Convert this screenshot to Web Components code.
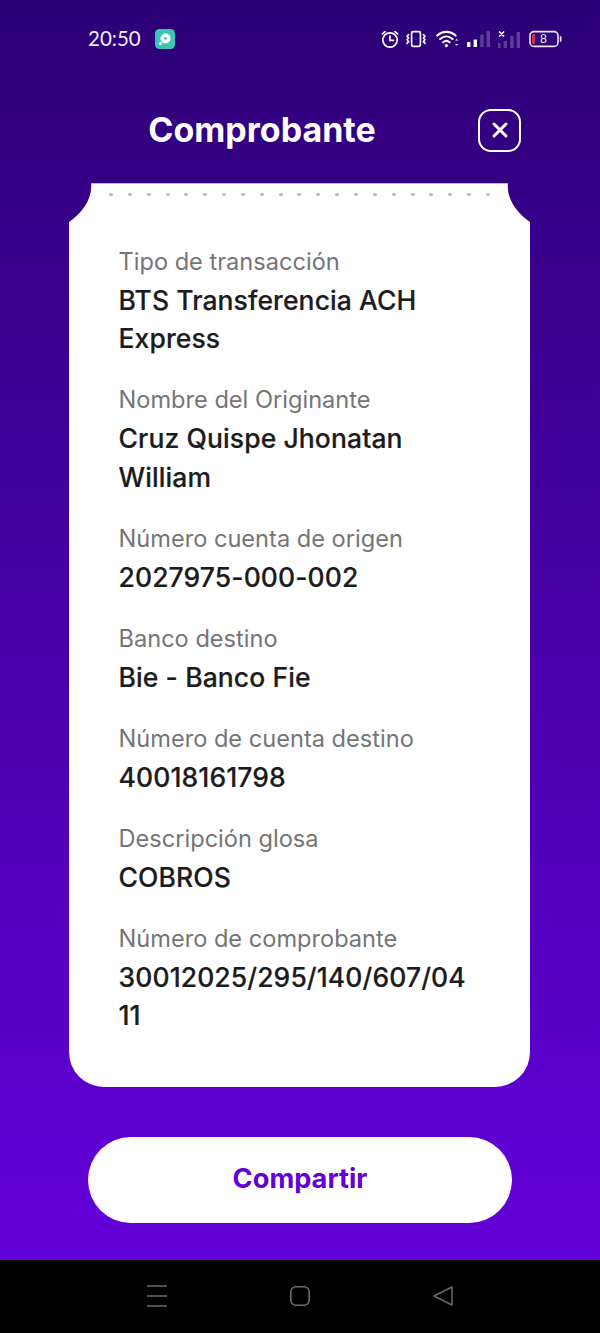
<!DOCTYPE html>
<html lang="es">
<head>
<meta charset="utf-8">
<title>Comprobante</title>
<style>
  html, body { margin: 0; padding: 0; background: #000; }
  body { font-family: "Inter", "Liberation Sans", sans-serif; }
</style>
</head>
<body>
<receipt-screen>
  <receipt-field label="Tipo de transacción">BTS Transferencia ACH Express</receipt-field>
  <receipt-field label="Nombre del Originante">Cruz Quispe Jhonatan William</receipt-field>
  <receipt-field label="Número cuenta de origen">2027975-000-002</receipt-field>
  <receipt-field label="Banco destino">Bie - Banco Fie</receipt-field>
  <receipt-field label="Número de cuenta destino">40018161798</receipt-field>
  <receipt-field label="Descripción glosa">COBROS</receipt-field>
  <receipt-field label="Número de comprobante">30012025/295/140/607/0411</receipt-field>
</receipt-screen>

<script>
class StatusBar extends HTMLElement {
    constructor() {
        super();
        this.attachShadow({ mode: 'open' });
    }

    connectedCallback() {
        this.shadowRoot.innerHTML = `
            <style>
                :host {
                    display: flex;
                    align-items: center;
                    height: 77px;
                    padding: 0 38px 0 88px;
                    box-sizing: border-box;
                    color: #fff;
                }
                .time {
                    font: 400 20.5px/1 "Lato", "Liberation Sans", sans-serif;
                    width: 52px;
                    margin-top: -1px;
                    color: #f4eefc;
                }
                .app { margin-left: 14.5px; display: block; }
                .icons { margin-left: auto; display: flex; align-items: center; }
                svg { display: block; }
            </style>
            <span class="time">20:50</span>
            <svg class="app" width="20" height="20" viewBox="0 0 20 20">
                <rect width="20" height="20" rx="4.5" fill="#3cc4b4"/>
                <circle cx="10.5" cy="9.5" r="5" fill="#fff"/>
                <circle cx="10.5" cy="9.5" r="1.4" fill="#3cc4b4"/>
                <circle cx="5.5" cy="14.5" r="1.6" fill="#fff"/>
            </svg>
            <div class="icons">
                <svg width="20" height="20" viewBox="0 0 20 20" fill="none" stroke="#fff" stroke-width="1.7" stroke-linecap="round" stroke-linejoin="round">
                    <circle cx="10" cy="11" r="7.2"/>
                    <path d="M10 7v4.4h3.4M2.4 4.8 5 2.6M17.6 4.8 15 2.6"/>
                </svg>
                <svg style="margin-left:6px" width="20" height="18" viewBox="0 0 20 18" fill="none" stroke="#fff" stroke-width="1.6" stroke-linecap="round" stroke-linejoin="round">
                    <rect x="5.6" y="1.6" width="8.8" height="14.8" rx="1.6"/>
                    <path d="M2.6 4.5 1 6.2l1.6 1.8L1 9.8l1.6 1.8L1 13.4M17.4 4.5 19 6.2l-1.6 1.8L19 9.8l-1.6 1.8 1.6 1.8"/>
                </svg>
                <svg style="margin-left:10px" width="23" height="20" viewBox="0 0 23 20" fill="none" stroke="#fff" stroke-width="2.1" stroke-linecap="round">
                    <path d="M1.2 6.6c5.4-5 13-5 18.4 0M4.2 10c3.7-3.3 8.7-3.3 12.4 0M7.2 13.2c2-1.7 4.4-1.7 6.4 0"/>
                    <circle cx="10.4" cy="16.6" r="1.6" fill="#fff" stroke="none"/>
                    <path d="m19 11.6 1.7-1.7 1.7 1.7zM19 15l1.7 1.7 1.7-1.7z" fill="#fff" stroke="none"/>
                </svg>
                <svg style="margin-left:8px" width="23" height="18" viewBox="0 0 23 18">
                    <rect x="0" y="12" width="3.4" height="5" rx=".6" fill="#fff"/>
                    <rect x="6.6" y="9.6" width="3.4" height="7.4" rx=".6" fill="#fff"/>
                    <rect x="13.2" y="4.6" width="3.4" height="12.4" rx=".6" fill="#5d3e97"/>
                    <rect x="19.6" y="1" width="3.4" height="16" rx=".6" fill="#5d3e97"/>
                </svg>
                <svg style="margin-left:7px" width="26" height="20" viewBox="0 0 26 20">
                    <path d="m2.6 3 4 4m0-4-4 4" stroke="#fff" stroke-width="1.7" fill="none" stroke-linecap="round"/>
                    <rect x="1" y="14" width="2.6" height="5" fill="#5d3e97"/>
                    <rect x="6.6" y="12" width="3.4" height="7" rx=".6" fill="#5d3e97"/>
                    <rect x="13.2" y="7" width="3.4" height="12" rx=".6" fill="#5d3e97"/>
                    <rect x="19.6" y="3" width="3.4" height="16" rx=".6" fill="#5d3e97"/>
                </svg>
                <svg style="margin-left:6px" width="33" height="18" viewBox="0 0 33 18">
                    <rect x="1" y="1.6" width="28" height="14.8" rx="4" fill="none" stroke="#efe6fb" stroke-width="1.6"/>
                    <rect x="3.2" y="4" width="2.8" height="10" rx=".8" fill="#e5304f"/>
                    <path d="M30.8 6.2h.7c.6 0 1 .4 1 1v3.6c0 .6-.4 1-1 1h-.7z" fill="#efe6fb"/>
                    <text x="14.5" y="13.4" font-family="Liberation Sans, sans-serif" font-size="12.5" text-anchor="middle" fill="#efe6fb">8</text>
                </svg>
            </div>
        `;
    }
}

class ReceiptHeader extends HTMLElement {
    constructor() {
        super();
        this.attachShadow({ mode: 'open' });
    }

    connectedCallback() {
        this.shadowRoot.innerHTML = `
            <style>
                :host {
                    display: flex;
                    align-items: center;
                    height: 106px;
                    padding: 0 79px 0 46px;
                    box-sizing: border-box;
                }
                h1 {
                    flex: 1;
                    margin: 0;
                    text-align: center;
                    color: #fff;
                    font: 700 34px/1.2 "Inter", "Liberation Sans", sans-serif;
                }
                button {
                    width: 43px;
                    height: 43px;
                    padding: 0;
                    box-sizing: border-box;
                    border: 2.2px solid #fff;
                    border-radius: 13px;
                    background: none;
                    display: flex;
                    align-items: center;
                    justify-content: center;
                }
            </style>
            <h1>Comprobante</h1>
            <button aria-label="Cerrar">
                <svg width="18" height="18" viewBox="0 0 18 18" stroke="#fff" stroke-width="3" stroke-linecap="round">
                    <path d="M3 3l12 12M15 3 3 15"/>
                </svg>
            </button>
        `;
    }
}

class ReceiptField extends HTMLElement {
    constructor() {
        super();
        this.attachShadow({ mode: 'open' });
    }

    connectedCallback() {
        const label = this.getAttribute('label') || '';
        this.shadowRoot.innerHTML = `
            <style>
                :host { display: block; }
                .label {
                    color: #757575;
                    font: 400 23.6px/39px "Inter", "Liberation Sans", sans-serif;
                }
                .value {
                    color: #1c1c1e;
                    font: 500 26.5px/38.8px "Inter", "Liberation Sans", sans-serif;
                    letter-spacing: 0.1px;
                    -webkit-text-stroke: 0.2px #1c1c1e;
                    padding-right: 6px;
                    overflow-wrap: anywhere;
                }
            </style>
            <div class="label">${label}</div>
            <div class="value"><slot></slot></div>
        `;
    }
}

class ReceiptCard extends HTMLElement {
    constructor() {
        super();
        this.attachShadow({ mode: 'open' });
    }

    connectedCallback() {
        const dots = Array.from({ length: 21 }, () => '<i></i>').join('');
        this.shadowRoot.innerHTML = `
            <style>
                :host {
                    display: block;
                    width: 461px;
                    margin-left: 69px;
                    box-sizing: border-box;
                    background: #fff;
                    border-top: 1px solid #c9a8f2;
                    border-radius: 0 0 35px 35px;
                    padding: 9px 50px 52.2px 49.5px;
                    clip-path: path("M22 -1H439C437 16 448 30 461 39V920H0V39C13 30 24 16 22 -1Z");
                }
                .dots {
                    display: flex;
                    justify-content: space-between;
                    margin: 0 -10px 0 -9.5px;
                    height: 3px;
                }
                .dots i {
                    width: 4px;
                    height: 3px;
                    border-radius: 1.5px;
                    background: #bdbdbd;
                }
                .fields {
                    display: flex;
                    flex-direction: column;
                    gap: 22.1px;
                    margin-top: 45.6px;
                }
            </style>
            <div class="dots">${dots}</div>
            <div class="fields"><slot></slot></div>
        `;
    }
}

class NavBar extends HTMLElement {
    constructor() {
        super();
        this.attachShadow({ mode: 'open' });
    }

    connectedCallback() {
        this.shadowRoot.innerHTML = `
            <style>
                :host {
                    display: flex;
                    align-items: center;
                    justify-content: space-between;
                    height: 73px;
                    padding: 0 146px 1px;
                    box-sizing: border-box;
                    background: #000;
                }
                svg { display: block; }
            </style>
            <svg width="22" height="24" viewBox="0 0 22 24" stroke="#6b6b6b" stroke-width="1.5" fill="none">
                <path d="M1 2h20M1 12h20M1 22h20"/>
            </svg>
            <svg width="22" height="22" viewBox="0 0 22 22" stroke="#6b6b6b" stroke-width="1.6" fill="none">
                <rect x="1.8" y="1.8" width="18.4" height="18.4" rx="5"/>
            </svg>
            <svg width="22" height="22" viewBox="0 0 22 22" stroke="#6b6b6b" stroke-width="1.5" fill="none" stroke-linejoin="round">
                <path d="M20 2 2 11l18 9z"/>
            </svg>
        `;
    }
}

class ShareButton extends HTMLElement {
    constructor() {
        super();
        this.attachShadow({ mode: 'open' });
    }

    connectedCallback() {
        this.shadowRoot.innerHTML = `
            <style>
                :host {
                    display: flex;
                    align-items: center;
                    justify-content: center;
                    width: 424px;
                    height: 85.6px;
                    margin: 49.6px 0 0 88px;
                    border-radius: 43px;
                    background: #fff;
                    color: #6200d9;
                    font: 700 27.2px/1 "Inter", "Liberation Sans", sans-serif;
                    padding-bottom: 2px;
                    box-sizing: border-box;
                }
            </style>
            <slot></slot>
        `;
    }
}

class ReceiptScreen extends HTMLElement {
    constructor() {
        super();
        this.attachShadow({ mode: 'open' });
    }

    connectedCallback() {
        this.shadowRoot.innerHTML = `
            <style>
                :host {
                    display: block;
                    width: 600px;
                    height: 1333px;
                    overflow: hidden;
                }
                .main {
                    height: 1260px;
                    box-sizing: border-box;
                    background: linear-gradient(180deg, #2d0076 0%, #6300da 100%);
                }
            </style>
            <div class="main">
                <status-bar></status-bar>
                <receipt-header></receipt-header>
                <receipt-card><slot></slot></receipt-card>
                <share-button>Compartir</share-button>
            </div>
            <nav-bar></nav-bar>
        `;
    }
}

customElements.define('status-bar', StatusBar);
customElements.define('receipt-header', ReceiptHeader);
customElements.define('receipt-field', ReceiptField);
customElements.define('receipt-card', ReceiptCard);
customElements.define('nav-bar', NavBar);
customElements.define('share-button', ShareButton);
customElements.define('receipt-screen', ReceiptScreen);
</script>
</body>
</html>
